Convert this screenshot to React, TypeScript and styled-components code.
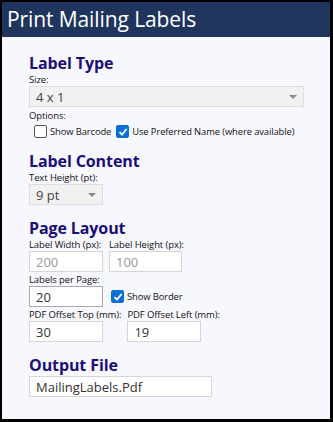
import React from 'react'
import styled, { createGlobalStyle } from 'styled-components'

const GlobalStyle = createGlobalStyle`
  html, body {
    margin: 0;
    padding: 0;
    background: #ffffff;
  }
  * {
    box-sizing: border-box;
  }
`

const Frame = styled.div`
  width: 333px;
  height: 422px;
  border-style: solid;
  border-color: #000;
  border-width: 2px 3px 3px 2px;
  background: #f7f8fe;
  font-family: "Open Sans", "Noto Sans", sans-serif;
  overflow: hidden;
`

const Header = styled.div`
  height: 35px;
  background: #1f355e;
  color: #fff;
  font-size: 21px;
  line-height: 35px;
  padding-left: 5px;
  letter-spacing: -0.1px;
`

const Body = styled.div`
  padding: 16px 0 0 27px;
`

const Section = styled.section`
  margin-bottom: 13px;
`

const Heading = styled.h2`
  margin: 0 0 1px;
  font-size: 16px;
  font-weight: 700;
  line-height: 20px;
  color: #1b0e79;
  letter-spacing: -0.1px;
`

const Caption = styled.div<{ $top?: number }>`
  margin-top: ${p => p.$top ?? 0}px;
  font-size: 9.5px;
  line-height: 12px;
  color: #111;
  letter-spacing: -0.1px;
`

const SelectBox = styled.div<{ $width: number }>`
  width: ${p => p.$width}px;
  height: 21px;
  background: #f1f1f1;
  border: 1px solid #dedede;
  display: flex;
  align-items: center;
  justify-content: space-between;
  padding: 0 6px 0 6px;
  font-size: 13px;
  color: #444;
`

const Caret = styled.span`
  width: 0;
  height: 0;
  border-left: 4px solid transparent;
  border-right: 4px solid transparent;
  border-top: 4px solid #888;
`

const Field = styled.div<{ $width: number; $disabled?: boolean; $focus?: boolean }>`
  width: ${p => p.$width}px;
  height: 21px;
  background: #fff;
  border: 1px solid ${p => (p.$focus ? '#a9a9a9' : '#d5d5d5')};
  display: flex;
  align-items: center;
  padding-left: 6px;
  font-size: 13px;
  color: ${p => (p.$disabled ? '#9a9a9a' : '#333')};
`

const Row = styled.div<{ $gap?: number; $top?: number }>`
  display: flex;
  align-items: flex-end;
  gap: ${p => p.$gap ?? 6}px;
  margin-top: ${p => p.$top ?? 0}px;
`

const Stack = styled.div`
  display: flex;
  flex-direction: column;
`

const InlineCheck = styled.div`
  height: 21px;
  display: flex;
  align-items: center;
`

const CheckRow = styled.div`
  display: flex;
  align-items: center;
  gap: 5px;
  padding-left: 5px;
  margin-top: 3px;
`

const Check = styled.label`
  display: flex;
  align-items: center;
  gap: 3px;
  font-size: 9.4px;
  color: #111;
  letter-spacing: -0.1px;
`

const Box = styled.span<{ $on?: boolean }>`
  width: 13px;
  height: 13px;
  border-radius: 2px;
  border: 1px solid ${p => (p.$on ? '#0b6fd6' : '#555')};
  background: ${p => (p.$on ? '#0b6fd6' : '#fff')};
  display: flex;
  align-items: center;
  justify-content: center;
`

const Tick = () => (
  <svg width="10" height="10" viewBox="0 0 10 10">
    <path d="M1.5 5.2 L4 7.6 L8.6 2" fill="none" stroke="#fff" strokeWidth="1.8" />
  </svg>
)

const CheckBox = ({ on, label }: { on?: boolean; label: string }) => (
  <Check>
    <Box $on={on}>{on && <Tick />}</Box>
    {label}
  </Check>
)

const App = () => (
  <>
    <GlobalStyle />
    <Frame>
      <Header>Print Mailing Labels</Header>
      <Body>
        <Section>
          <Heading>Label Type</Heading>
          <Caption>Size:</Caption>
          <SelectBox $width={275}>
            4 x 1
            <Caret />
          </SelectBox>
          <Caption $top={3}>Options:</Caption>
          <CheckRow>
            <CheckBox label="Show Barcode" />
            <CheckBox on label="Use Preferred Name (where available)" />
          </CheckRow>
        </Section>

        <Section>
          <Heading>Label Content</Heading>
          <Caption>Text Height (pt):</Caption>
          <SelectBox $width={74}>
            9 pt
            <Caret />
          </SelectBox>
        </Section>

        <Section>
          <Heading>Page Layout</Heading>
          <Row>
            <Stack>
              <Caption>Label Width (px):</Caption>
              <Field $width={74} $disabled>200</Field>
            </Stack>
            <Stack>
              <Caption>Label Height (px):</Caption>
              <Field $width={73} $disabled>100</Field>
            </Stack>
          </Row>
          <Row $gap={8} $top={2}>
            <Stack>
              <Caption>Labels per Page:</Caption>
              <Field $width={74} $focus>20</Field>
            </Stack>
            <InlineCheck>
              <CheckBox on label="Show Border" />
            </InlineCheck>
          </Row>
          <Row $gap={6} $top={2}>
            <Stack>
              <Caption>PDF Offset Top (mm):</Caption>
              <Field $width={74}>30</Field>
            </Stack>
            <Stack>
              <Caption>PDF Offset Left (mm):</Caption>
              <Field $width={74}>19</Field>
            </Stack>
          </Row>
        </Section>

        <Section>
          <Heading>Output File</Heading>
          <Field $width={183}>MailingLabels.Pdf</Field>
        </Section>
      </Body>
    </Frame>
  </>
)

export default App
